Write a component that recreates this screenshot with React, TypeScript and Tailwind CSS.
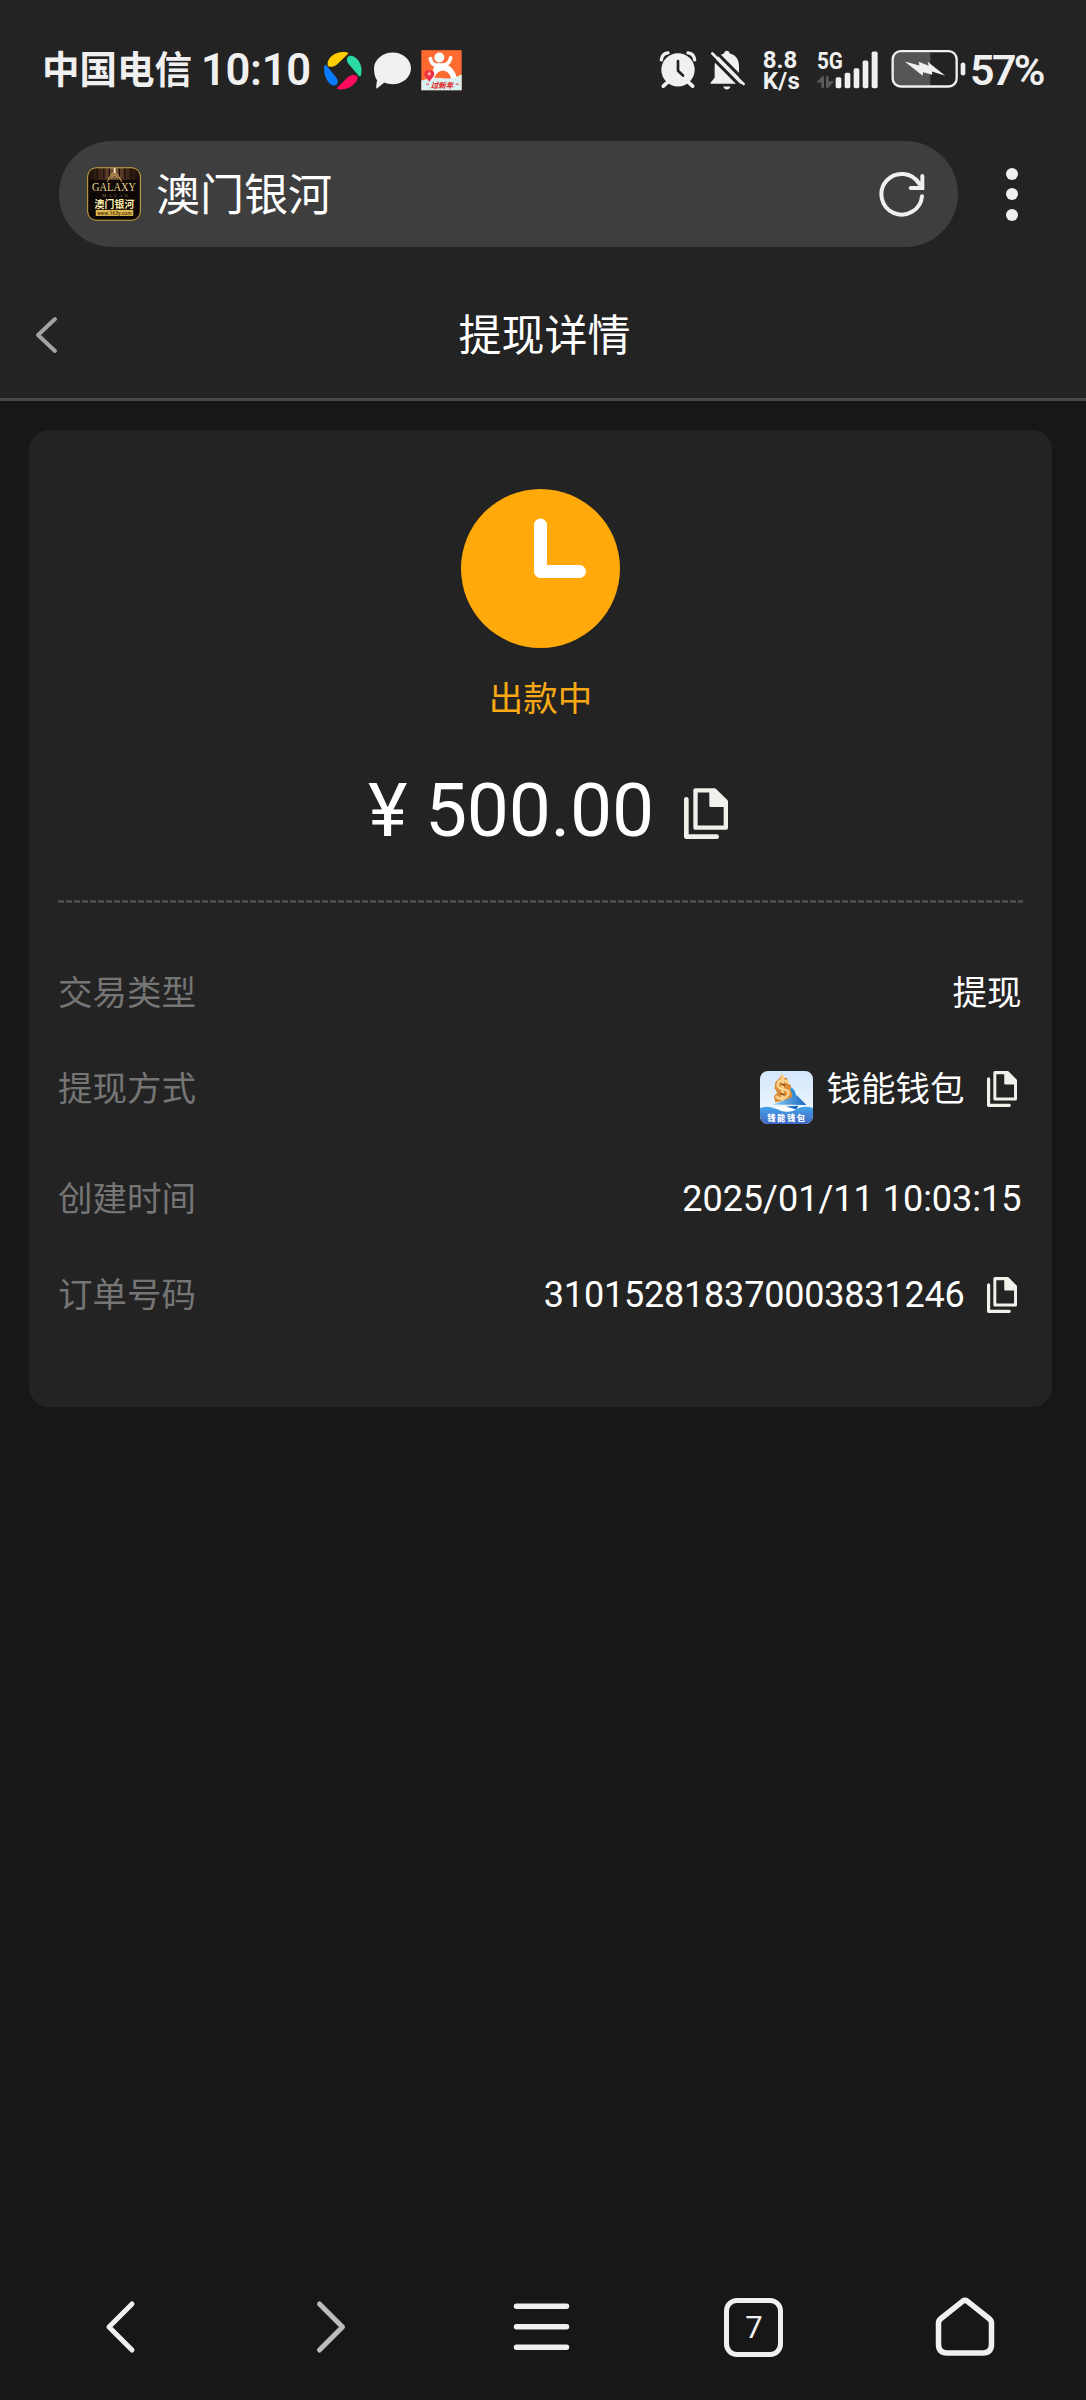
import type { ReactNode } from "react";

const CopyIcon = ({ className }: { className: string }) => (
    <svg viewBox="0 0 132 153" className={className} preserveAspectRatio="none" fill="none">
        <path d="M7 34V146H98" stroke="#f2f0eb" strokeWidth="14" strokeLinecap="round" strokeLinejoin="round" />
        <path d="M34.500 7H91L125.500 41V119H34.500Z" stroke="#f2f0eb" strokeWidth="13" strokeLinejoin="round" />
        <path d="M76 3H92L129 40V57H80Q76 57 76 53Z" fill="#f2f0eb" />
    </svg>
);

const StatusBar = () => (
    <div className="flex h-[141px] items-center text-[#f0f0f0]">
        <span className="ml-[42px] w-[159px] pt-px text-[37.5px] leading-none font-bold whitespace-nowrap">中国电信</span>
        <span className="w-[121px] text-[43.5px] leading-none font-semibold tracking-[-0.3px] whitespace-nowrap">10:10</span>
        <svg viewBox="876 49.5 126 144" className="h-12 w-[42px] shrink-0">
            <path d="M893 104C890 82 915 60 950 65C958 66 954 71 949 75L921 102C910 112 894 110 893 104Z" fill="#ffcc00" />
            <path d="M960 76C978 73 1002 104 993 134C991 141 986 137 983 132L954 98C947 88 952 77 960 76Z" fill="#2bd9a5" />
            <path d="M883 108C884 101 888 103 892 108L919 142C929 155 920 167 910 165C895 163 879 133 883 108Z" fill="#0a7bff" />
            <path d="M923 170L955 139C966 131 983 132 983 141C982 158 955 181 926 176C920 175 919 174 923 170Z" fill="#ff0a5e" />
        </svg>
        <svg viewBox="1028 49.500 120 144" className="ml-[8.700px] h-12 w-10 shrink-0">
            <path d="M1087 66C1118 66 1142 88 1142 113C1142 140 1117 161 1087 161C1078 161 1069 159 1062 156L1040 174C1036 174 1038 164 1040 149C1034 140 1031 130 1031 113C1032 88 1056 66 1087 66Z" fill="#f0f0f0" />
        </svg>
        <svg viewBox="1173 49.500 123 144" className="ml-[8.300px] h-12 w-[41px] shrink-0">
            <rect x="1174" y="59" width="121" height="120" fill="#ff6a30" />
            <path d="M1174 150Q1215 138 1240 143T1295 132V179H1174Z" fill="#d9f1f2" />
            <circle cx="1228" cy="81" r="15" fill="#fff" />
            <path d="M1201 84Q1204 104 1221 104L1243 103Q1258 100 1262 82" stroke="#fff" strokeWidth="11" fill="none" strokeLinecap="round" />
            <path d="M1217 100L1247 99C1268 111 1277 126 1280 141L1263 144C1260 126 1246 118 1235 121C1222 123 1216 134 1212 146L1202 150C1203 130 1211 112 1217 100Z" fill="#fff" />
            <path d="M1198 154L1184 136C1180 123 1191 115 1199 121C1207 116 1217 125 1211 137Z" fill="#ef3046" />
            <circle cx="1198" cy="130" r="5" fill="#ffb5a8" />
            <path d="M1188 161H1197M1277 161H1286" stroke="#e33a35" strokeWidth="3" />
            <text x="1202" y="172" fontSize="22" fontWeight="900" fontStyle="italic" textLength="68" lengthAdjust="spacingAndGlyphs" fill="#e02f2f">过新年</text>
        </svg>

        <svg viewBox="55 49.500 120 144" className="ml-[195.800px] h-12 w-10 shrink-0" fill="none">
            <circle cx="115" cy="118" r="50" fill="#f0f0f0" />
            <path d="M65 88Q67 69 85 67M145 67Q163 69 165 88" stroke="#f0f0f0" strokeWidth="10" strokeLinecap="round" />
            <path d="M84 155L71 167M146 155L159 167" stroke="#f0f0f0" strokeWidth="11" strokeLinecap="round" />
            <path d="M115 92V121L130 135" stroke="#232323" strokeWidth="8" strokeLinecap="round" strokeLinejoin="round" />
        </svg>
        <svg viewBox="205 49.500 120 144" className="ml-[10px] h-12 w-10 shrink-0" fill="none">
            <path d="M253 69C254 58 269 58 270 69C291 74 298 89 298 109V146L307 160H213C211 157 214 154 219 149L225 141V107C225 88 235 74 253 69Z" fill="#f0f0f0" />
            <path d="M251 168H272C270 180 253 180 251 168Z" fill="#f0f0f0" />
            <path d="M212 76L308 173M225 60L321 157" stroke="#232323" strokeWidth="9" />
            <path d="M218 69L312 161" stroke="#f0f0f0" strokeWidth="8" strokeLinecap="round" />
        </svg>
        <div className="ml-[15px] w-[53px] text-[24px] leading-[20.5px] font-bold whitespace-nowrap">
            <div>8.8</div>
            <div className="tracking-[0.3px]">K/s</div>
        </div>
        <svg viewBox="526 49.500 189 144" className="h-12 w-[63px] shrink-0" fill="#f0f0f0">
            <text x="529" y="116" fontSize="70" fontWeight="700" textLength="78" lengthAdjust="spacingAndGlyphs">5G</text>
            <rect x="585" y="140" width="17" height="33" rx="5" />
            <rect x="612" y="127" width="17" height="46" rx="5" />
            <rect x="639" y="113" width="17" height="60" rx="5" />
            <rect x="666" y="90" width="17" height="83" rx="5" />
            <rect x="693" y="63" width="18" height="110" rx="5" />
            <path d="M527 156L545 137H550V172H542V156ZM556 137H564V152H580L563 172H556Z" fill="#5b5b5b" />
        </svg>
        <svg viewBox="752 49.500 228 144" className="ml-[12.300px] h-12 w-[76px] shrink-0">
            <path d="M870 65V165H780Q759 165 759 145V85Q759 65 780 65Z" fill="#555" />
            <rect x="757" y="62" width="192" height="106" rx="24" fill="none" stroke="#f0f0f0" strokeWidth="7" />
            <rect x="961" y="96" width="14" height="39" rx="7" fill="#f0f0f0" />
            <path d="M793 93L837 105L835 94L865 106L862 94L915 136L875 123L876 133L848 125L847 136Z" fill="#f0f0f0" />
        </svg>
        <span className="ml-[3px] text-[43px] leading-none font-semibold tracking-[-2.7px]">57%</span>
    </div>
);

const SiteIcon = () => (
    <svg viewBox="0 0 160 160" className="h-[54px] w-[54px]">
        <defs>
            <linearGradient id="curtain" x1="0" x2="1" y1="0" y2="0">
                <stop offset="0" stopColor="#1a0d08" />
                <stop offset=".3" stopColor="#4a2e20" />
                <stop offset=".5" stopColor="#80603f" />
                <stop offset=".7" stopColor="#4a2e20" />
                <stop offset="1" stopColor="#1a0d08" />
            </linearGradient>
        </defs>
        <rect x="2" y="2" width="156" height="156" rx="26" fill="#0d0705" />
        <path d="M28 3H132Q150 5 155 20V38H5V20Q10 5 28 3Z" fill="url(#curtain)" />
        <path d="M30 4V34M50 4V34M66 4V30M96 4V30M112 4V34M130 4V34" stroke="#1a0d08" strokeWidth="4" />
        <path d="M82 3V18" stroke="#fff3cf" strokeWidth="5" />
        <path d="M60 44L71 23L79 17L90 22L103 44M72 34Q80 14 92 34" stroke="#c79a55" strokeWidth="3" fill="none" />
        <rect x="2" y="2" width="156" height="156" rx="26" fill="none" stroke="#cfab45" strokeWidth="3" />
        <text x="15" y="72" fontSize="34" fontFamily="Liberation Serif" textLength="130" lengthAdjust="spacingAndGlyphs" fill="#ecd58c">GALAXY</text>
        <text x="45" y="89" fontSize="13" fontFamily="Liberation Serif" textLength="76" fill="#9a7d48">MACAU</text>
        <text x="22" y="121" fontSize="29" fontWeight="700" textLength="118" fill="#ffefad">澳门银河</text>
        <rect x="26" y="127" width="111" height="18" fill="#e0b950" />
        <text x="30" y="141" fontSize="15" fontWeight="700" textLength="102" fill="#5b4012">www.163y.com</text>
    </svg>
);

const WalletIcon = () => (
    <svg viewBox="0 0 160 160" className="h-[53px] w-[53px]">
        <defs>
            <linearGradient id="sky" x1="0" x2="0" y1="0" y2="1">
                <stop offset="0" stopColor="#d3e7fb" />
                <stop offset="1" stopColor="#f5faff" />
            </linearGradient>
            <linearGradient id="sea" x1="0" x2="0" y1="0" y2="1">
                <stop offset="0" stopColor="#45a4ea" />
                <stop offset="1" stopColor="#4166c4" />
            </linearGradient>
            <linearGradient id="boat" x1="0" x2="1" y1="0" y2="0">
                <stop offset="0" stopColor="#8dd0f5" />
                <stop offset="1" stopColor="#1565c0" />
            </linearGradient>
            <clipPath id="wallet">
                <rect width="160" height="160" rx="24" />
            </clipPath>
        </defs>
        <g clipPath="url(#wallet)">
            <rect width="160" height="160" fill="url(#sky)" />
            <path d="M92 48Q107 56 110 77L88 92Z" fill="#2e8fd8" />
            {/* gold coin sign standing on the boat */}
            <path d="M60 20L66 9L71 20L82 21L83 36L94 44L92 58L98 70L94 84L74 90L46 94L42 76L52 66L44 52L46 34Z" fill="#d98b38" />
            <path d="M84 34Q62 20 55 36T72 56T80 78Q66 90 50 78M68 14V88" fill="none" stroke="#fbd28c" strokeWidth="8" strokeLinecap="round" />
            <path d="M64 39L76 44M62 68L74 72" stroke="#8c4d17" strokeWidth="5" />
            <path d="M39 101L112 74L140 103Z" fill="url(#boat)" />
            <path d="M0 112Q22 103 45 113T98 121Q128 101 160 112V160H0Z" fill="url(#sea)" />
            <path d="M46 110Q80 101 124 107L108 116Q84 128 62 119Z" fill="#fff" />
            <path d="M78 107L116 105L110 116Z" fill="#1768c4" />
            <text x="22" y="152" fontSize="25" fontWeight="900" textLength="114" fill="#fff">钱能钱包</text>
        </g>
    </svg>
);

const AddressBar = () => (
    <div className="flex h-[106px] items-center">
        <div className="ml-[59px] flex h-full w-[899px] items-center rounded-full bg-[#3e3e3e] pl-[28px]">
            <SiteIcon />
            <span className="ml-[15px] pt-[3px] text-[44px] leading-none text-white">澳门银河</span>
            <svg viewBox="0 0 138 138" className="mr-[33px] ml-auto h-[46px] w-[46px]" fill="none" stroke="#f0f0f0" strokeWidth="12" strokeLinecap="round" strokeLinejoin="round">
                <path d="M129 76A61 61 0 1 1 121 39" />
                <path d="M130 15V51H95" strokeLinejoin="miter" />
            </svg>
        </div>
        <div className="ml-[48px] flex flex-col gap-[8.500px]">
            <i className="h-3 w-3 rounded-full bg-[#f0f0f0]" />
            <i className="h-3 w-3 rounded-full bg-[#f0f0f0]" />
            <i className="h-3 w-3 rounded-full bg-[#f0f0f0]" />
        </div>
    </div>
);

const Row = ({ label, className = "", children }: { label: string; className?: string; children: ReactNode }) => (
    <div className={`flex h-24 items-center justify-between pr-[1.500px] text-[34.500px] leading-none ${className}`}>
        <span className="pt-[3px] text-[#757575]">{label}</span>
        <div className="flex items-center text-white">{children}</div>
    </div>
);

const DetailCard = () => (
    <div className="mt-[29px] ml-[29px] flex h-[977px] w-[1023px] flex-col rounded-[20px] bg-[#232323] px-[29px] pt-[59px]">
        <svg viewBox="0 0 159 159" className="h-[159px] w-[159px] self-center">
            <circle cx="79.500" cy="79.500" r="79.500" fill="#ffa90b" />
            <path d="M79.500 36V82.500H118.500" fill="none" stroke="#fff" strokeWidth="13" strokeLinecap="round" strokeLinejoin="round" />
        </svg>
        <div className="mt-[25px] h-[52px] text-center text-[34.500px] leading-[52px] text-[#f9a914]">出款中</div>
        <div className="mt-[41px] flex h-[88px] items-center pl-[310px] text-white">
            <span className="w-[57px] text-[75px] leading-none">¥</span>
            <span className="w-[259px] text-[75px] leading-none tracking-[-0.3px]">500.00</span>
            <CopyIcon className="mt-[7px] h-[51px] w-[44px]" />
        </div>
        <div className="mt-[46px] h-[3px] bg-[repeating-linear-gradient(90deg,#4a4a4a_0_6px,transparent_6px_8px)]" />
        <div className="pt-[41px]">
            <Row label="交易类型"><span className="pt-[3px]">提现</span></Row>
            <Row label="提现方式" className="mb-[14px]">
                <div className="mt-[19px] mr-[14px]"><WalletIcon /></div>
                <span className="pt-[3px]">钱能钱包</span>
                <CopyIcon className="mt-[2px] mr-[5px] ml-[22px] h-[36px] w-[30px]" />
            </Row>
            <Row label="创建时间">
                <span className="pt-[2px] text-[36px]">2025/01/11 10:03:15</span>
            </Row>
            <Row label="订单号码">
                <span className="pt-[2px] text-[36px] tracking-[-0.200px]">310152818370003831246</span>
                <CopyIcon className="mt-[2px] mr-[5px] ml-[22px] h-[36px] w-[30px]" />
            </Row>
        </div>
    </div>
);

const BottomNav = () => (
    <div className="mt-auto mb-[43px] grid h-[60px] grid-cols-5 place-items-center pr-[15px] pl-[14px]">
        <svg viewBox="0 0 60 60" className="h-[60px] w-[60px]" fill="none" stroke="#f0f0f0" strokeWidth="5" strokeLinecap="round" strokeLinejoin="round">
            <path d="M42 7L19 30L42 53" />
        </svg>
        <svg viewBox="0 0 60 60" className="h-[60px] w-[60px]" fill="none" stroke="#bcbcbc" strokeWidth="5" strokeLinecap="round" strokeLinejoin="round">
            <path d="M18.500 7L41.500 30L18.500 53" />
        </svg>
        <svg viewBox="0 0 60 60" className="h-[60px] w-[60px]" stroke="#f0f0f0" strokeWidth="5.500" strokeLinecap="round">
            <path d="M4.500 9.300H54.500M4.500 29.800H54.500M4.500 50.300H54.500" />
        </svg>
        <div className="flex h-[59px] w-[59px] items-center justify-center rounded-[13px] border-[5px] border-[#f0f0f0] text-[31px] leading-none text-[#f0f0f0]">7</div>
        <svg viewBox="0 0 60 60" className="h-[60px] w-[60px]" fill="none" stroke="#f0f0f0" strokeWidth="5.500" strokeLinejoin="round">
            <path d="M27.500 4.300Q30 2.500 32.500 4.300L54 21.500Q56.500 23.500 56.500 26V47Q56.500 56 48 56H12Q3.500 56 3.500 47V26Q3.500 23.500 6 21.500Z" />
        </svg>
    </div>
);

export default function App() {
    return (
        <div className="flex h-[2400px] w-[1086px] flex-col overflow-hidden bg-[#171717] font-['Roboto','Noto_Sans_CJK_SC',sans-serif]">
            <div className="h-[401px] border-b-[3px] border-[#484848] bg-[#232323]">
                <StatusBar />
                <AddressBar />
                <div className="grid h-[176px] grid-cols-[1fr_auto_1fr] items-center">
                    <svg viewBox="0 0 24 38" className="ml-[35px] h-[38px] w-6" fill="none" stroke="#a3a3a3" strokeWidth="4" strokeLinecap="round" strokeLinejoin="round">
                        <path d="M20 3L3 19L20 35" />
                    </svg>
                    <span className="pt-[3px] pl-[3px] text-[43px] leading-none text-white">提现详情</span>
                </div>
            </div>
            <DetailCard />
            <BottomNav />
        </div>
    );
}
